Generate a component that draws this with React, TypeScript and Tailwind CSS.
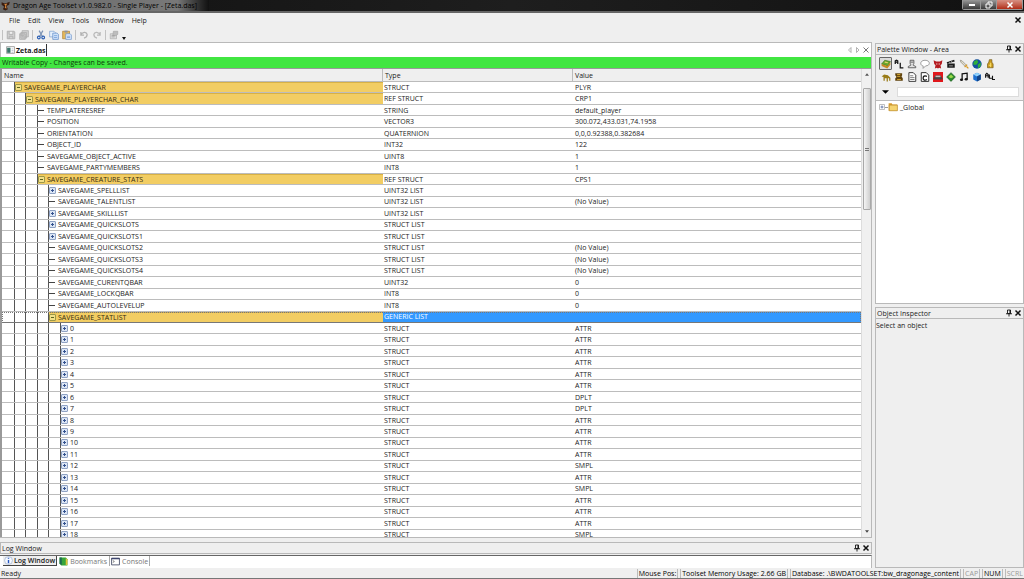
import type { ReactNode } from "react";

type Kind = "leaf" | "plus" | "minus";
type Row = { level: number; kind: Kind; name: string; type: string; value: string; selected?: boolean };

const r = (level: number, kind: Kind, name: string, type: string, value = "", selected = false): Row => ({
  level,
  kind,
  name,
  type,
  value,
  selected,
});

const rows: Row[] = [
  r(1, "minus", "SAVEGAME_PLAYERCHAR", "STRUCT", "PLYR"),
  r(2, "minus", "SAVEGAME_PLAYERCHAR_CHAR", "REF STRUCT", "CRP1"),
  r(3, "leaf", "TEMPLATERESREF", "STRING", "default_player"),
  r(3, "leaf", "POSITION", "VECTOR3", "300.072,433.031,74.1958"),
  r(3, "leaf", "ORIENTATION", "QUATERNION", "0,0,0.92388,0.382684"),
  r(3, "leaf", "OBJECT_ID", "INT32", "122"),
  r(3, "leaf", "SAVEGAME_OBJECT_ACTIVE", "UINT8", "1"),
  r(3, "leaf", "SAVEGAME_PARTYMEMBERS", "INT8", "1"),
  r(3, "minus", "SAVEGAME_CREATURE_STATS", "REF STRUCT", "CPS1"),
  r(4, "plus", "SAVEGAME_SPELLLIST", "UINT32 LIST"),
  r(4, "leaf", "SAVEGAME_TALENTLIST", "UINT32 LIST", "(No Value)"),
  r(4, "plus", "SAVEGAME_SKILLLIST", "UINT32 LIST"),
  r(4, "plus", "SAVEGAME_QUICKSLOTS", "STRUCT LIST"),
  r(4, "plus", "SAVEGAME_QUICKSLOTS1", "STRUCT LIST"),
  r(4, "leaf", "SAVEGAME_QUICKSLOTS2", "STRUCT LIST", "(No Value)"),
  r(4, "leaf", "SAVEGAME_QUICKSLOTS3", "STRUCT LIST", "(No Value)"),
  r(4, "leaf", "SAVEGAME_QUICKSLOTS4", "STRUCT LIST", "(No Value)"),
  r(4, "leaf", "SAVEGAME_CURENTQBAR", "UINT32", "0"),
  r(4, "leaf", "SAVEGAME_LOCKQBAR", "INT8", "0"),
  r(4, "leaf", "SAVEGAME_AUTOLEVELUP", "INT8", "0"),
  r(4, "minus", "SAVEGAME_STATLIST", "GENERIC LIST", "", true),
  ...Array.from({ length: 19 }, (_, i) =>
    r(5, "plus", String(i), "STRUCT", i === 6 || i === 7 ? "DPLT" : i === 12 || i === 14 || i === 18 ? "SMPL" : "ATTR"),
  ),
];

const guideWidths = ["w-[13px]", "w-[11px]", "w-[12px]", "w-[11px]", "w-[12px]"];

function Icon({ children, className = "size-[10px]" }: { children: ReactNode; className?: string }) {
  return (
    <svg viewBox="0 0 16 16" className={`shrink-0 ${className}`} fill="none" aria-hidden="true">
      {children}
    </svg>
  );
}

function CloseGlyph({ color = "#111", width = 3 }: { color?: string; width?: number }) {
  return (
    <Icon className="size-[8px]">
      <path d="M3 3l10 10M13 3L3 13" stroke={color} strokeWidth={width} />
    </Icon>
  );
}

function PinGlyph() {
  return (
    <Icon className="size-[8px]">
      <path d="M5 2h6v7H5zM2 9.500h12M8 10v5" stroke="#111" strokeWidth="1.800" />
      <path d="M9 2h2v7H9z" fill="#111" />
    </Icon>
  );
}

function Expander({ kind }: { kind: Kind }) {
  if (kind === "leaf") return <span className="mr-[3px] h-px w-[6px] shrink-0 bg-[#444]" />;
  const open = kind === "minus";
  return (
    <button aria-label={open ? "Collapse" : "Expand"} className="mr-[2px] flex shrink-0">
      <svg viewBox="0 0 14 14" className="size-[7px]" aria-hidden="true">
        <rect x="1" y="1" width="12" height="12" rx="1" fill={open ? "#f2e08a" : "#dce6f5"} stroke={open ? "#9c9848" : "#8fa2c4"} strokeWidth="2" />
        <path d={open ? "M4 7h6" : "M4 7h6M7 4v6"} stroke={open ? "#5d6420" : "#34528f"} strokeWidth="2" />
      </svg>
    </button>
  );
}

function TreeRow({ row }: { row: Row }) {
  const gold = row.kind === "minus";
  return (
    <tr
      className={`grid min-h-0 grid-cols-[381px_190px_1fr] overflow-hidden border-b ${
        row.selected ? "border-[#777] outline-1 -outline-offset-1 outline-dotted outline-[#777]" : "border-[#bcbcbc]"
      }`}
    >
      <td className="flex min-h-0 overflow-hidden">
        {guideWidths.slice(0, row.level).map((w, i) => (
          <span key={i} className={`shrink-0 border-r border-[#555] ${w}`} />
        ))}
        <span className={`flex flex-1 items-center ${gold ? "border-t border-[#d8b145] bg-[#f2cd63] text-[#332b10]" : ""}`}>
          <Expander kind={row.kind} />
          {row.name}
        </span>
      </td>
      <td className={`flex items-center overflow-hidden pl-px ${row.selected ? "bg-[#3399ff] text-white" : ""}`}>{row.type}</td>
      <td className={`flex items-center overflow-hidden pl-[2px] ${row.selected ? "bg-[#3399ff]" : ""}`}>{row.value}</td>
    </tr>
  );
}

const toolGroups: { name: string; art: ReactNode }[][] = [
  [
    { name: "Save", art: <path d="M2 2h11l1 1v11H2zM5 2v5h6V2M5 14v-4h6v4" fill="#d2d2d2" stroke="#b0b0b0" strokeWidth="1.500" /> },
    { name: "Save All", art: <path d="M5 1h10v10H5zM3 4h9v9H3zM1 6h9v9H1zM3 6v3h5V6" fill="#d0d0d0" stroke="#b0b0b0" strokeWidth="1.300" /> },
  ],
  [
    {
      name: "Cut",
      art: (
        <>
          <path d="M5 1l5 9M11 1L6 10" stroke="#7c93b5" strokeWidth="2" />
          <circle cx="4.500" cy="12" r="2.200" stroke="#2c5fb3" strokeWidth="1.800" />
          <circle cx="11.500" cy="12" r="2.200" stroke="#2c5fb3" strokeWidth="1.800" />
        </>
      ),
    },
    {
      name: "Copy",
      art: (
        <>
          <path d="M1 2h7l2 2v7H1z" fill="#e6f0fc" stroke="#6d95cc" />
          <path d="M6 5h7l2 2v8H6z" fill="#cfe2fa" stroke="#4d7dc0" />
          <path d="M8 9h5M8 12h5" stroke="#5b8cd0" />
        </>
      ),
    },
    {
      name: "Paste",
      art: (
        <>
          <path d="M1 2h11v12H1z" fill="#e5b95c" stroke="#a9792c" />
          <path d="M4 1h5v3H4z" fill="#8b93a3" />
          <path d="M6 6h7l2 2v7H6z" fill="#dceafd" stroke="#5f8ac4" />
          <path d="M8 10h5M8 12h5" stroke="#5b8cd0" />
        </>
      ),
    },
  ],
  [
    { name: "Undo", art: <path d="M3 3v5h5M3 8c2-5 9-6 10-1 0 3-2 5-5 6" stroke="#b2b2b2" strokeWidth="2" /> },
    { name: "Redo", art: <path d="M13 3v5H8M13 8c-2-5-9-6-10-1 0 3 2 5 5 6" stroke="#b9b9b9" strokeWidth="2" /> },
  ],
  [
    {
      name: "Properties",
      art: (
        <>
          <path d="M2 6h10v8H2z" fill="#dcdcdc" stroke="#a5a5a5" />
          <path d="M7 2h7v5l-3 2H6z" fill="#bdbdbd" stroke="#a5a5a5" />
          <path d="M4 9h5M4 11h5" stroke="#999" />
        </>
      ),
    },
  ],
];

const paletteTools: { name: string; art: ReactNode }[] = [
  {
    name: "Area",
    art: (
      <>
        <path d="M1 8l5-6 9 2-4 7z" fill="#69a82e" stroke="#3d6d1b" />
        <path d="M1 8l9 3 5-6v4l-5 6-9-4z" fill="#c98a22" />
        <path d="M6 5l5 1" stroke="#e5d36a" strokeWidth="2" />
      </>
    ),
  },
  { name: "Area Layout", art: <path d="M2 8V3l2-1 2 1v5M2 5h4M10 6v8h5" stroke="#151515" strokeWidth="2" /> },
  {
    name: "Character",
    art: <path d="M5 2h6v5l-1 2v1l4 2v2H2v-2l4-2V9L5 7zM6 5h4" fill="#e3e3e3" stroke="#4b4b4b" strokeWidth="1.300" />,
  },
  { name: "Conversation", art: <path d="M8 2c9 0 9 9 1 9l-4 4v-4C-1 10 0 2 8 2z" fill="#fff" stroke="#8a8a8a" strokeWidth="1.300" /> },
  {
    name: "Creature",
    art: (
      <>
        <path d="M1 2l4 2h6l4-2-1 6-2 2 1 5-3-1-2 1-2-1-3 1 1-5-2-2z" fill="#b51a1f" />
        <path d="M5 8h2M9 8h2" stroke="#fff" strokeWidth="1.300" />
      </>
    ),
  },
  {
    name: "Cutscene",
    art: (
      <>
        <path d="M1 5l12-4 1 3-12 3zM2 7h12v7H2z" fill="#1c1c1c" />
        <path d="M4 4l2 2M8 3l2 2M5 11h6" stroke="#ddd" />
      </>
    ),
  },
  {
    name: "Item",
    art: (
      <>
        <path d="M2 2l3 1 7 7-2 2-7-7z" fill="#e3dfd0" stroke="#817b6b" />
        <path d="M9 13l4-4M12 12l3 3" stroke="#d89a24" strokeWidth="2" />
      </>
    ),
  },
  {
    name: "Map",
    art: (
      <>
        <circle cx="8" cy="8" r="7.500" fill="#144f9e" />
        <path d="M3 4l5-3 2 4-3 4H2zM9 9l5-4v6l-4 4z" fill="#2fae3a" />
      </>
    ),
  },
  {
    name: "Merchant",
    art: (
      <>
        <path d="M6 5l1-4h4v4l2 3v6H4V8z" fill="#c99a1f" stroke="#6e5514" />
        <path d="M9 6v7M6 10h4" stroke="#fae16d" strokeWidth="1.500" />
      </>
    ),
  },
  {
    name: "Placeable",
    art: <path d="M1 7l4-3 6 1 4 4v5h-2v-4h-2v5H9v-5H6v4H4V8z" fill="#9a7c18" />,
  },
  {
    name: "Plot",
    art: (
      <>
        <path d="M2 2h11v3l-1 2 2 3v4H2v-4l2-2-2-3z" fill="#60430d" />
        <path d="M5 4h5M5 7h5M5 12h6" stroke="#d5a933" strokeWidth="1.500" />
      </>
    ),
  },
  {
    name: "Script",
    art: (
      <>
        <path d="M3 1h7l4 4v10H3z" fill="#fff" stroke="#333" strokeWidth="1.500" />
        <path d="M5 6h5M5 9h7M5 12h7" stroke="#333" />
      </>
    ),
  },
  {
    name: "Compiled Script",
    art: (
      <>
        <path d="M2 1h8l4 4v10H2z" fill="#fff" stroke="#222" strokeWidth="1.500" />
        <path d="M11 7C7 5 5 7 5 10s3 4 6 2" stroke="#111" strokeWidth="2" />
      </>
    ),
  },
  {
    name: "Stage",
    art: (
      <>
        <path d="M0 0h16v16H0z" fill="#e0171b" />
        <path d="M1 10l3-5h8l3 5v2H1z" fill="#4a4040" />
        <path d="M4 7h8" stroke="#c4bcbc" strokeWidth="2.500" />
      </>
    ),
  },
  {
    name: "Trigger",
    art: (
      <>
        <path d="M8 1l7 7-7 7-7-7z" fill="#2a8c2d" stroke="#174f18" />
        <path d="M8 4l4 4-4 2-4-2z" fill="#9bd84a" />
      </>
    ),
  },
  {
    name: "Sound",
    art: (
      <>
        <path d="M5 12V3l8-1v9" stroke="#111" strokeWidth="2" />
        <ellipse cx="4" cy="12.500" rx="2.500" ry="2" fill="#111" />
        <ellipse cx="11.500" cy="11.500" rx="2.500" ry="2" fill="#111" />
      </>
    ),
  },
  {
    name: "Model",
    art: (
      <>
        <path d="M2 4l6-3 6 3v8l-6 3-6-3z" fill="#1c6fd0" />
        <path d="M2 4l6 3 6-3-6-3z" fill="#8fd0fa" />
        <path d="M8 7l6-3v8l-6 3z" fill="#124487" />
      </>
    ),
  },
  {
    name: "All",
    art: <path d="M1 9V4l2-2 2 2v5M1 6h4M7 4v6h4M12 6v6h4" stroke="#111" strokeWidth="1.800" />,
  },
];

function PanelTitle({ title, className = "" }: { title: string; className?: string }) {
  return (
    <header className={`flex h-[12px] shrink-0 items-center border border-[#b9b9b9] bg-[#efefef] pl-px pr-[1px] ${className}`}>
      <h2 className="flex-1">{title}</h2>
      <button aria-label={`Pin ${title}`}>
        <PinGlyph />
      </button>
      <button aria-label={`Close ${title}`} className="ml-[1px]">
        <CloseGlyph />
      </button>
    </header>
  );
}

export default function App() {
  return (
    <div className="flex h-screen flex-col overflow-hidden bg-[#efefef] font-['Open_Sans','Noto_Sans',sans-serif] text-[7px] leading-[9px] whitespace-nowrap text-[#1a1a1a]">
      <header className="flex h-[13px] shrink-0 items-start border-b-2 border-[#666] bg-linear-to-r from-[#111] via-[#1e1e1e] to-[#111]">
        <div className="flex h-full items-center gap-[2px] bg-linear-to-r from-[#6a6a6a] via-[#787878] via-85% to-[#111] pr-[12px] pl-px">
          <Icon>
            <path d="M1 2l5 2 3-1 5-2-1 5-4 2 2 5-4 2-4-2 2-4-4-3z" fill="#3a1d10" />
            <path d="M5 5l5-1-2 4 1 4-3-1 1-4z" fill="#d98a3c" />
          </Icon>
          <h1 className="text-black">Dragon Age Toolset v1.0.982.0 - Single Player - [Zeta.das]</h1>
        </div>
        <div className="mr-px ml-auto flex h-[10px] overflow-hidden rounded-b-[2px] border border-t-0 border-[#999]">
          <button aria-label="Minimize" className="flex w-[17px] items-end justify-center bg-linear-to-b from-[#999] to-[#3c3c3c] pb-[3px]">
            <span className="h-[2px] w-[6px] bg-white" />
          </button>
          <button aria-label="Restore" className="flex w-[16px] items-center justify-center border-l border-[#999] bg-linear-to-b from-[#999] to-[#3c3c3c]">
            <Icon className="size-[8px]">
              <path d="M6 5V2h8v8h-3M2 6h8v8H2z" stroke="#fff" strokeWidth="2" />
            </Icon>
          </button>
          <button aria-label="Close" className="flex w-[26px] items-center justify-center border-l border-[#999] bg-linear-to-b from-[#d69083] to-[#b02a14]">
            <CloseGlyph color="#fff" />
          </button>
        </div>
      </header>

      <nav className="flex h-[14px] shrink-0 items-center gap-[8px] pl-[9px]">
        {["File", "Edit", "View", "Tools", "Window", "Help"].map((m) => (
          <button key={m}>{m}</button>
        ))}
        <button aria-label="Close document" className="mr-[2px] ml-auto">
          <CloseGlyph />
        </button>
      </nav>

      <div className="flex h-[15px] shrink-0 items-center pl-[2px]">
        {toolGroups.map((group, i) => (
          <div key={i} className="flex items-center gap-[3px] border-l border-[#c2c2c2] px-[3px]">
            {group.map((t) => (
              <button key={t.name} aria-label={t.name}>
                <Icon>{t.art}</Icon>
              </button>
            ))}
          </div>
        ))}
        <button aria-label="Toolbar options" className="mt-[7px]">
          <svg viewBox="0 0 4 3" className="h-[3px] w-[4px]" aria-hidden="true">
            <path d="M0 0h4L2 3z" fill="#111" />
          </svg>
        </button>
      </div>

      <div className="flex min-h-0 flex-1 gap-[3px]">
        <div className="flex min-w-0 flex-1 flex-col">
          <main className="flex min-h-0 flex-1 flex-col border-t border-r border-b border-[#b9b9b9] bg-white">
            <div className="flex h-[14px] shrink-0 items-center border-l border-[#b9b9b9] pl-[5px]">
              <button className="flex h-[12px] items-center gap-[1px] border-r border-[#333] font-bold">
                <svg viewBox="0 0 16 14" className="h-[8px] w-[9px]" aria-hidden="true">
                  <path d="M1 1h14v12H1z" fill="#fff" stroke="#999" strokeWidth="1.500" />
                  <path d="M2 3h6v9H2z" fill="#39756a" />
                  <path d="M10 5h3M10 8h3M10 11h3" stroke="#8ba3b5" />
                </svg>
                Zeta.das
              </button>
              <div className="ml-auto flex items-center pr-px">
                <button aria-label="Previous tab">
                  <Icon className="size-[8px]">
                    <path d="M10 3v10L5 8z" stroke="#999" strokeWidth="1.500" />
                  </Icon>
                </button>
                <button aria-label="Next tab">
                  <Icon className="size-[8px]">
                    <path d="M5 3v10l5-5z" stroke="#999" strokeWidth="1.500" />
                  </Icon>
                </button>
                <button aria-label="Close tab">
                  <CloseGlyph color="#777" width={2} />
                </button>
              </div>
            </div>
            <p className="flex h-[11px] shrink-0 items-center bg-[#41e641] pl-[2px] font-medium text-[#0c3a0c]">Writable Copy - Changes can be saved.</p>
            <div className="flex min-h-0 flex-1 border-t border-l-2 border-[#999]">
              <div className="min-w-0 flex-1 overflow-hidden">
                <table className="flex flex-col">
                  <thead className="block">
                    <tr className="grid h-[13px] grid-cols-[381px_190px_1fr] border-b border-[#bbb] bg-[#efefef] text-left">
                      <th className="flex items-center border-r border-[#bbb] pl-[2px] font-normal">Name</th>
                      <th className="flex items-center border-r border-[#bbb] pl-[2px] font-normal">Type</th>
                      <th className="flex items-center pl-[2px] font-normal">Value</th>
                    </tr>
                  </thead>
                  <tbody className="grid h-[459px] auto-rows-fr">
                    {rows.map((row, i) => (
                      <TreeRow key={i} row={row} />
                    ))}
                  </tbody>
                </table>
              </div>
              <div className="flex w-[10px] shrink-0 flex-col items-center border-l border-[#ddd] bg-[#f0f0f0] py-[4px]">
                <button aria-label="Scroll up">
                  <svg viewBox="0 0 6 4" className="h-[3px] w-[4px]" aria-hidden="true">
                    <path d="M0 4h6L3 0z" fill="#555" />
                  </svg>
                </button>
                <div className="mt-[12px] flex h-[122px] w-[8px] flex-col items-center justify-center gap-px rounded-[1px] border border-[#a8a8a8] bg-linear-to-r from-[#f4f4f4] to-[#cfcfcf]">
                  <span className="h-px w-[4px] bg-[#777]" />
                  <span className="h-px w-[4px] bg-[#777]" />
                </div>
                <button aria-label="Scroll down" className="mt-auto">
                  <svg viewBox="0 0 6 4" className="h-[3px] w-[4px]" aria-hidden="true">
                    <path d="M0 0h6L3 4z" fill="#444" />
                  </svg>
                </button>
              </div>
            </div>
          </main>

          <section className="mt-[4px] shrink-0">
            <PanelTitle title="Log Window" />
            <div className="mt-px flex h-[13px] border-t border-r border-t-[#666] border-r-[#b9b9b9] bg-white pb-[2px] pl-[3px]">
              <button className="flex items-center gap-px border-r border-b border-[#444] bg-[#efefef] px-px font-semibold">
                <Icon className="size-[9px]">
                  <circle cx="8" cy="8" r="7" fill="#f4f8ff" stroke="#8aa0c4" />
                  <path d="M8 7v6M8 3v2" stroke="#2556c0" strokeWidth="2.500" />
                </Icon>
                Log Window
              </button>
              <button className="flex items-center gap-[2px] border-r border-[#aaa] px-[2px] text-[#777]">
                <Icon className="size-[9px]">
                  <path d="M1 1h11l3 3v11H4l-3-3z" fill="#36a53a" />
                  <path d="M1 1h4v13l-4-2z" fill="#1f6b52" />
                  <path d="M12 2l3 2v10h-3z" fill="#e0c33a" />
                </Icon>
                Bookmarks
              </button>
              <button className="flex items-center gap-[2px] border-r border-[#aaa] px-px text-[#777]">
                <Icon className="size-[9px]">
                  <path d="M1 2h14v12H1z" fill="#fff" stroke="#444b66" strokeWidth="1.500" />
                  <path d="M1 2h14v2H1z" fill="#333b66" />
                  <path d="M3 6l3 2-3 2" stroke="#333" />
                </Icon>
                Console
              </button>
            </div>
          </section>
        </div>

        <aside className="flex w-[149px] shrink-0 flex-col">
          <PanelTitle title="Palette Window - Area" className="mt-px" />
          <section className="flex h-[249px] flex-col border border-t-0 border-[#b9b9b9]">
            <div className="grid grid-cols-[repeat(9,13px)] pt-[2px] pl-[3px]">
              {paletteTools.map((t, i) => (
                <button
                  key={t.name}
                  aria-label={t.name}
                  className={`flex h-[13px] items-center justify-center ${i === 0 ? "rounded-[1px] border border-[#666] bg-[#dcdcdc]" : ""}`}
                >
                  <Icon>{t.art}</Icon>
                </button>
              ))}
            </div>
            <div className="flex h-[18px] items-center border-b border-[#bbb] pr-[4px] pl-[6px]">
              <button aria-label="Filter">
                <svg viewBox="0 0 8 4" className="h-[4px] w-[7px]" aria-hidden="true">
                  <path d="M0 0h8L4 4z" fill="#000" />
                </svg>
              </button>
              <input aria-label="Search palette" className="ml-[8px] h-[10px] min-w-0 flex-1 border border-[#dcdcdc] bg-white px-[2px] outline-none" />
            </div>
            <div className="flex flex-1 items-start bg-white pt-[1px] pl-[3px]">
              <button className="flex items-center">
                <svg viewBox="0 0 12 12" className="size-[6px]" aria-hidden="true">
                  <path d="M1 1h10v10H1z" fill="#fff" stroke="#aaa" strokeWidth="1.500" />
                  <path d="M3 6h6M6 3v6" stroke="#445c96" strokeWidth="1.500" />
                </svg>
                <span className="mr-px h-0 w-[2px] border-t border-dotted border-[#999]" />
                <Icon>
                  <path d="M1 2h5l1 2h8v10H1z" fill="#d99a2b" />
                  <path d="M2 5h13v9H2z" fill="#f5d471" stroke="#b98a2e" />
                </Icon>
                <span className="ml-[2px]">_Global</span>
              </button>
            </div>
          </section>
          <PanelTitle title="Object Inspector" className="mt-[3px]" />
          <section className="flex-1 border border-t-0 border-[#b9b9b9] pt-[2px]">
            <p>Select an object</p>
          </section>
        </aside>
      </div>

      <footer className="flex h-[11px] shrink-0 items-center border-b border-[#777] pl-px">
        <span className="mr-auto">Ready</span>
        <div className="flex gap-[2px]">
          {["Mouse Pos:", "Toolset Memory Usage: 2.66 GB", "Database: .\\BWDATOOLSET:bw_dragonage_content"].map((s) => (
            <span key={s} className="border-x border-[#bbb] px-px text-black">
              {s}
            </span>
          ))}
          <span className="border-x border-[#bbb] px-px text-[#999]">CAP</span>
          <span className="border-x border-[#bbb] px-px text-black">NUM</span>
          <span className="border-l border-[#bbb] px-px text-[#999]">SCRL</span>
        </div>
      </footer>
    </div>
  );
}
